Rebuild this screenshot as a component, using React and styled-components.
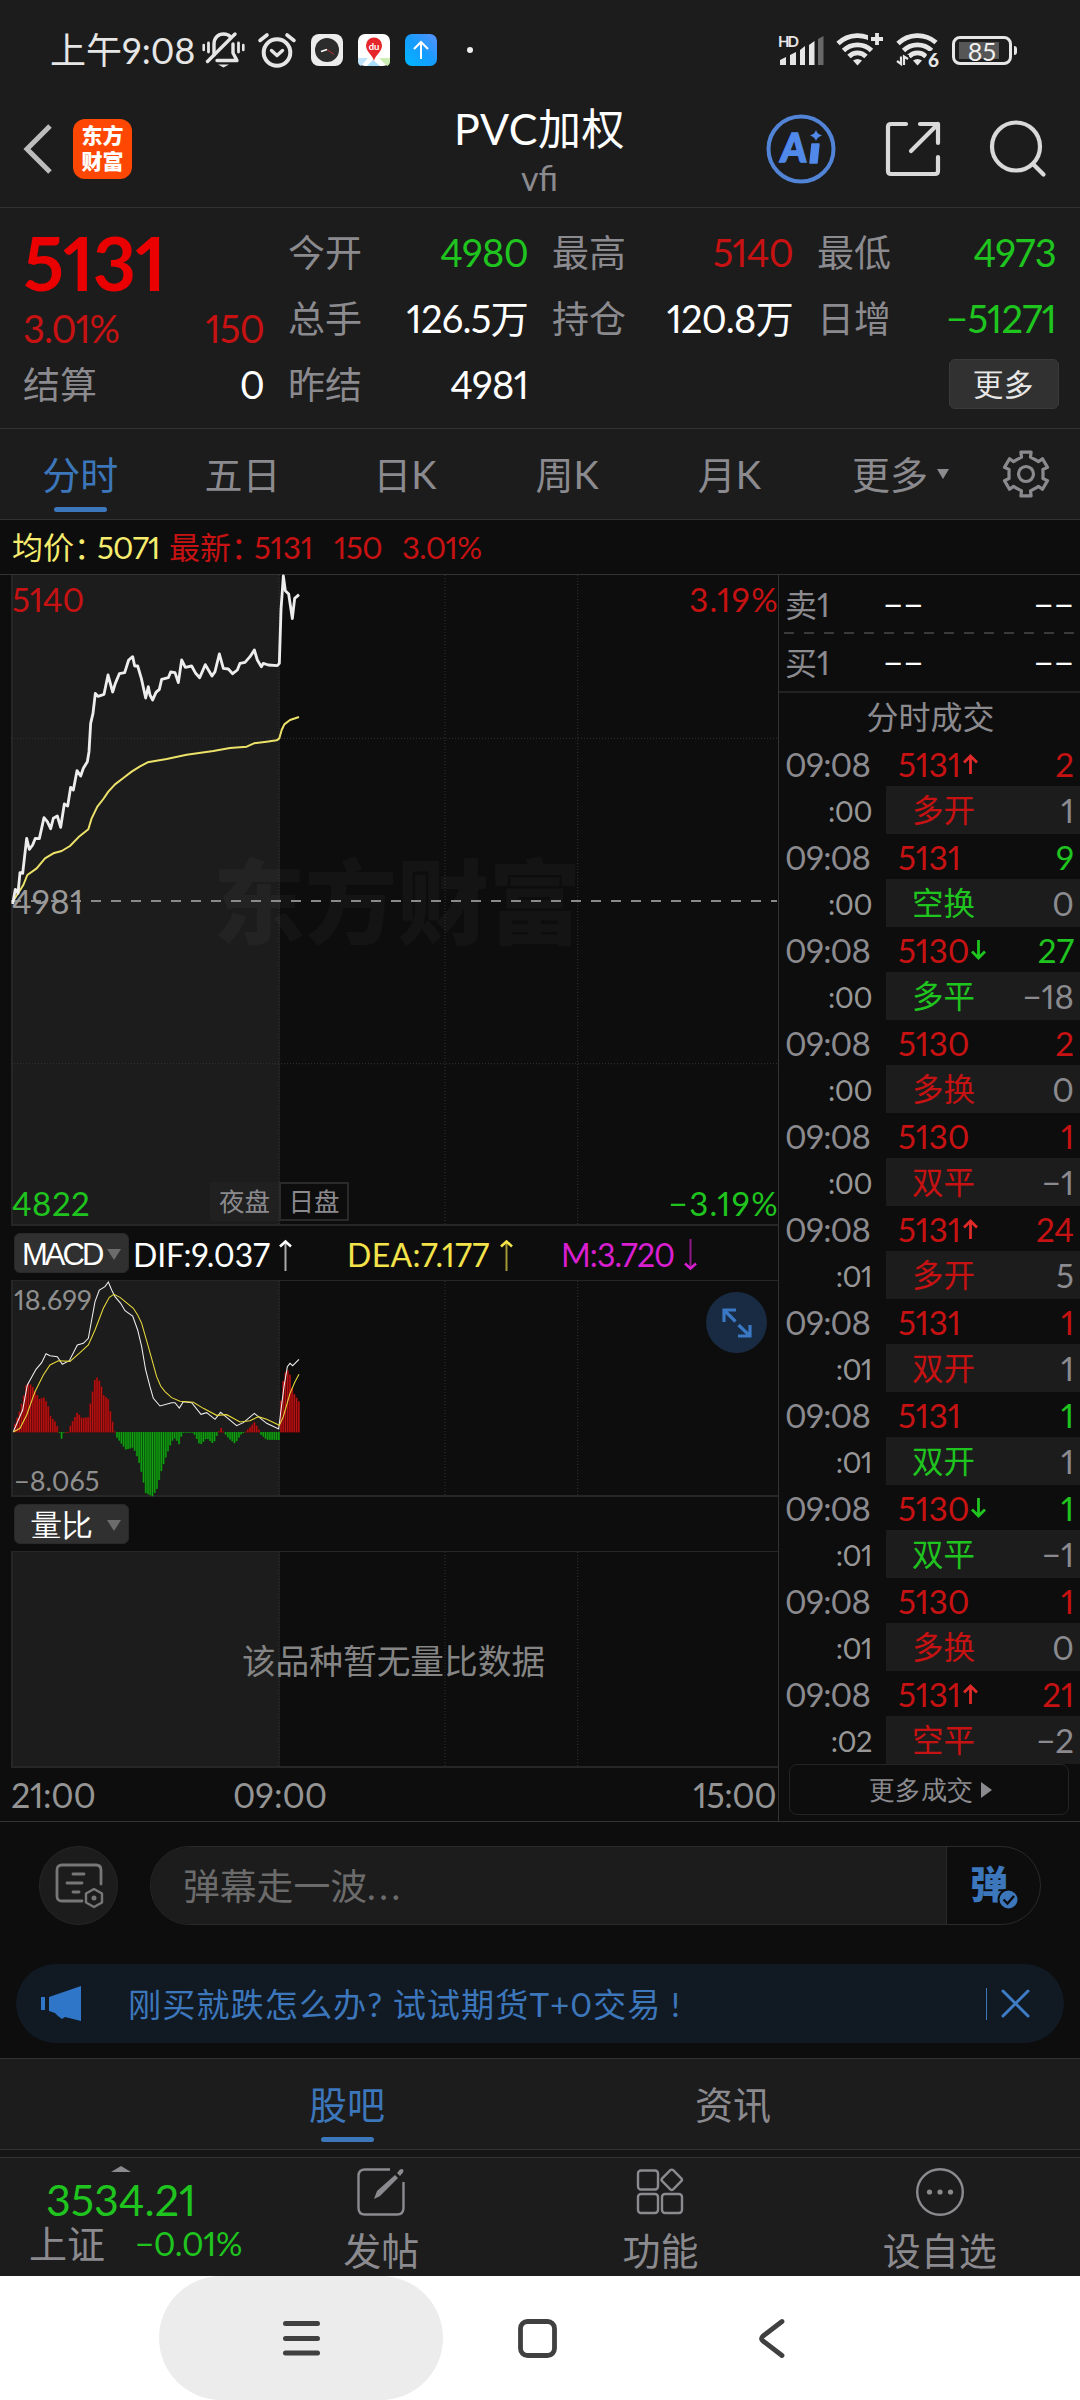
import React from 'react';
import styled, { createGlobalStyle } from 'styled-components';

const C = {
  page: '#0d0d0d',
  panel: '#1c1c1c',
  line: '#333333',
  faint: '#262626',
  grey: '#8b8a8f',
  red: '#c61212',
  green: '#1fc41f',
  yellow: '#f3e34a',
  blue: '#3c76bb',
  magenta: '#d91fd0',
};

const Global = createGlobalStyle`
  html, body { margin: 0; padding: 0; background: ${C.page}; }
  * { box-sizing: border-box; }
  body {
    font-family: Lato, "Noto Sans CJK SC", sans-serif;
    font-variant-numeric: proportional-nums;
    color: ${C.grey};
  }
  svg { display: block; flex: none; overflow: visible; }
`;

const Screen = styled.div`
  width: 1080px;
  height: 2400px;
  display: flex;
  flex-direction: column;
  background: ${C.page};
  overflow: hidden;
`;

const T = styled.span`
  display: inline-block;
  white-space: pre;
  line-height: 1;
  font-size: ${(p) => p.$s || 37}px;
  color: ${(p) => p.$c || C.grey};
  letter-spacing: ${(p) => p.$ls || 0}px;
  font-weight: ${(p) => p.$w || 400};
`;

/* ---------- status bar ---------- */
const StatusBar = styled.div`
  height: 96px;
  padding: 4px 62px 0 50px;
  display: flex;
  align-items: center;
  justify-content: space-between;
  background: ${C.panel};
`;
const StatusGroup = styled.div`
  display: flex;
  align-items: center;
  gap: ${(p) => p.$gap}px;
`;
const Clock = styled(T)`
  width: 144px;
  margin-right: -7px;
`;

const BellOff = () => (
  <svg width="43" height="38" viewBox="0 0 43 38" fill="none" stroke="#e6e6e6" strokeWidth="3.4" strokeLinecap="round">
    <path d="M12 24V13c0-6 4-10 9.500-10 3 0 5.500 1 7 3" />
    <path d="M31 13v9l4 7.500H15" strokeLinejoin="round" />
    <path d="M5.500 30.500 33 3" />
    <path d="M16 33.500h11l-5.500 3z" fill="#e6e6e6" stroke="none" />
    <path d="M6.500 12v9M36.500 12v9" strokeWidth="2.800" />
    <path d="M1.700 14v5M41.300 14v5" strokeWidth="2.600" />
  </svg>
);
const AlarmSvg = styled.svg`
  margin-left: -2px;
`;
const Alarm = () => (
  <AlarmSvg width="38" height="36" viewBox="0 0 38 36" fill="none" stroke="#e6e6e6" strokeWidth="4" strokeLinecap="round">
    <circle cx="19" cy="20.500" r="13.300" />
    <path d="M13.500 18.500l5.500 5 5.500-5" strokeWidth="3.400" strokeLinejoin="round" />
    <path d="M2 8.500l7-5.500M36 8.500L29 3" strokeWidth="3.600" />
  </AlarmSvg>
);
const ClockApp = () => (
  <svg width="32" height="32" viewBox="0 0 32 32">
    <rect width="32" height="32" rx="8" fill="#ececec" />
    <circle cx="16" cy="16" r="12" fill="#2c2c2c" />
    <path d="M10 17.500l6-2" stroke="#fff" strokeWidth="1.600" />
    <path d="M16 15.500l7 5" stroke="#c03030" strokeWidth="1" />
  </svg>
);
const MapApp = () => (
  <svg width="32" height="32" viewBox="0 0 32 32">
    <rect width="32" height="32" rx="7" fill="#fff" />
    <path d="M0 24h10l-7 8q-3-1-3-5z" fill="#bfe4fa" />
    <path d="M9 32l6-6 7 6z" fill="#a9dcf9" />
    <path d="M21 24h11v3q0 4-3 5z" fill="#cdeeb4" />
    <path d="M16 27c-1-6-8-9-8-15.500a8 8 0 0 1 16 0C24 18 17 21 16 27z" fill="#e5262b" />
    <text x="16" y="15.500" fontSize="9.500" fontWeight="700" fill="#fff" textAnchor="middle" fontFamily="Lato">du</text>
  </svg>
);
const UpApp = () => (
  <svg width="32" height="32" viewBox="0 0 32 32">
    <defs>
      <linearGradient id="up" x1="0" y1="1" x2="1" y2="0">
        <stop offset="0" stopColor="#00b8ff" />
        <stop offset=".5" stopColor="#159cff" />
        <stop offset="1" stopColor="#5a92fb" />
      </linearGradient>
    </defs>
    <rect width="32" height="32" rx="7" fill="url(#up)" />
    <path d="M16 25V8M9 15l7-7 7 7" fill="none" stroke="#fff" strokeWidth="2" />
  </svg>
);
const Dot = styled.i`
  width: 6px;
  height: 6px;
  margin-left: 15px;
  border-radius: 50%;
  background: #eee;
`;
const Signal = () => (
  <svg width="46" height="32" viewBox="0 0 46 32" fill="#e6e6e6">
    <text x="0" y="13" fontSize="15" fontWeight="700" fontFamily="Lato" textLength="21">HD</text>
    <path d="M2 26l6-3v8H2zM12 21l6-3v13h-6zM22 16l5-4v19h-5zM31 11l5.500-4v24H31z" />
    <path d="M40 5l5.500-3v29H40z" fill="#686868" />
  </svg>
);
const Wifi = ({ children, w }) => (
  <svg width={w} height="36" viewBox={`0 0 ${w} 36`} fill="none" stroke="#e6e6e6" strokeWidth="4.800">
    <path d="M2 12.500a28 28 0 0 1 38-1" transform="translate(0 -1)" />
    <path d="M7.500 18.500a20 20 0 0 1 28 0" />
    <path d="M13 24.500a12 12 0 0 1 17 0" />
    <path d="M17 28.500q4.500-3 9 0l-4.500 5z" fill="#e6e6e6" stroke="none" />
    {children}
  </svg>
);
const WifiPlus = () => (
  <Wifi w={48}>
    <path d="M32 0h16v14h-8l-8-5z" fill={C.panel} stroke="none" />
    <path d="M41 1v12M35 7h12" strokeWidth="3.800" />
  </Wifi>
);
const WifiSix = () => (
  <Wifi w={44}>
    <path d="M31 19h14v18H30zM0 23h13v13H0z" fill={C.panel} stroke="none" />
    <path d="M1 29l4 3V24.500M12 27l-4-2.500V33" strokeWidth="2.200" />
    <text x="32" y="35" fontSize="19" fontWeight="900" fill="#e6e6e6" stroke="none" fontFamily="Lato">6</text>
  </Wifi>
);
const Battery = styled.div`
  width: 60px;
  height: 29px;
  margin-right: 6px;
  border: 3px solid #e6e6e6;
  border-radius: 8px;
  padding: 3px 4px;
  position: relative;
  display: flex;
  &::after {
    content: '';
    position: absolute;
    right: -8px;
    top: 7px;
    width: 3.500px;
    height: 9px;
    border-radius: 0 3px 3px 0;
    background: #e6e6e6;
  }
`;
const Charge = styled.div`
  width: 40px;
  background: #565656;
`;
const Percent = styled(T)`
  position: absolute;
  inset: 0;
  text-align: center;
  line-height: 24px;
`;

/* ---------- header ---------- */
const Header = styled.header`
  height: 112px;
  display: grid;
  grid-template-columns: 1fr auto 1fr;
  align-items: center;
  padding: 0 34px 6px 24px;
  background: ${C.panel};
  border-bottom: 1px solid ${C.line};
`;
const HeaderSide = styled.div`
  display: flex;
  align-items: center;
  gap: ${(p) => p.$gap}px;
  justify-content: ${(p) => (p.$end ? 'flex-end' : 'flex-start')};
`;
const Brand = styled.div`
  width: 59px;
  height: 60px;
  border-radius: 12px;
  background: #fe4703;
  display: flex;
  flex-direction: column;
  align-items: center;
  justify-content: center;
  gap: 5px;
  padding-bottom: 3px;
`;
const TitleBox = styled.div`
  display: flex;
  flex-direction: column;
  align-items: center;
  gap: 11px;
  padding: 4px 0 0 9px;
`;
const BackIcon = () => (
  <svg width="28" height="50" viewBox="0 0 28 50"><path d="M26 2L3 25l23 23" fill="none" stroke="#bdbdbd" strokeWidth="5" /></svg>
);
const AiIcon = () => (
  <svg width="70" height="70" viewBox="0 0 70 70">
    <circle cx="35" cy="35" r="32.500" fill="none" stroke="#5184d6" strokeWidth="4" />
    <g fill="#5189ea" fontFamily="Lato" fontWeight="900" stroke="#5189ea" strokeWidth="1.500">
      <text x="14" y="48" fontSize="40" transform="skewX(-4) translate(3 0)" textLength="26" lengthAdjust="spacingAndGlyphs">A</text>
      <path d="M46 30h7l-2 19h-7z" strokeLinejoin="round" />
    </g>
    <path d="M50 16q1 4 6 5.500-5 1.500-6 5.500-1-4-6-5.500 5-1.500 6-5.500z" fill="#5189ea" />
  </svg>
);
const ShareIcon = () => (
  <svg width="56" height="56" viewBox="0 0 56 56" fill="none" stroke="#d9d9d9" strokeWidth="4.200" strokeLinecap="round" strokeLinejoin="round">
    <path d="M21 3H6Q3 3 3 6v44q0 3 3 3h44q3 0 3-3V36" />
    <path d="M35 3h18v19M53 3L26 30" />
  </svg>
);
const SearchIcon = () => (
  <svg width="56" height="57" viewBox="0 0 56 57" fill="none" stroke="#d9d9d9" strokeWidth="4.200" strokeLinecap="round">
    <circle cx="26" cy="26.500" r="24" />
    <path d="M43.500 44.500l10 10" />
  </svg>
);

/* ---------- quote ---------- */
const Quote = styled.section`
  height: 221px;
  display: grid;
  grid-template-columns: 241px 240px 241px 239px;
  column-gap: 24px;
  padding: 11px 24px 10px 23px;
  background: ${C.panel};
  border-bottom: 1px solid ${C.line};
`;
const QuoteCol = styled.div`
  display: flex;
  flex-direction: column;
`;
const Pair = styled.div`
  height: 66px;
  display: flex;
  align-items: center;
  justify-content: space-between;
`;
const Last = styled.div`
  height: 132px;
  display: flex;
  flex-direction: column;
  justify-content: space-between;
  padding: 6px 0 4px;
`;
const Split = styled.div`
  display: flex;
  justify-content: space-between;
`;
const MoreBtn = styled.button`
  width: 110px;
  height: 50px;
  margin: 8px -3px 0 auto;
  border: 1px solid #3a3a3a;
  border-radius: 6px;
  background: #313131;
  padding: 0;
  display: grid;
  place-items: center;
`;

/* ---------- tabs ---------- */
const Tabs = styled.nav`
  height: 91px;
  display: flex;
  background: ${C.panel};
  border-bottom: 1px solid ${C.line};
`;
const Tab = styled.div`
  width: ${(p) => p.$w || 162.300}px;
  display: flex;
  align-items: center;
  justify-content: center;
  gap: 9px;
  padding: ${(p) => p.$pt || 0}px 2px 0 0;
  position: relative;
  &::after {
    content: '';
    display: ${(p) => (p.$on ? 'block' : 'none')};
    position: absolute;
    left: 50%;
    margin-left: -27px;
    bottom: 7px;
    width: 53px;
    height: 5px;
    border-radius: 3px;
    background: ${C.blue};
  }
`;
const Tri = styled.i`
  width: 0;
  height: 0;
  border: solid transparent;
  border-width: ${(p) => p.$b};
  border-${(p) => p.$side}-color: ${(p) => p.$c};
`;
const gearPath = () => {
  const pts = [];
  for (let k = 0; k < 6; k++) {
    const base = -90 + k * 60;
    [[-27, 17], [-15, 17.5], [-13, 22.5], [13, 22.5], [15, 17.5], [27, 17]].forEach(([a, r]) => {
      const t = ((base + a) * Math.PI) / 180;
      pts.push(`${(24 + r * Math.cos(t)).toFixed(1)} ${(24 + r * Math.sin(t)).toFixed(1)}`);
    });
  }
  return `M${pts.join('L')}Z`;
};
const Gear = () => (
  <svg width="48" height="48" viewBox="0 0 48 48" fill="none" stroke={C.grey} strokeWidth="3.200" strokeLinejoin="round">
    <path d={gearPath()} />
    <circle cx="24" cy="24" r="7.500" />
  </svg>
);

const InfoLine = styled.div`
  height: 55px;
  display: flex;
  align-items: center;
  padding: 1px 0 0 12px;
  border-bottom: 1px solid ${C.line};
`;
const Info = styled(T)`
  width: ${(p) => p.$wd}px;
`;
const Colon = styled.span`
  letter-spacing: -9px;
`;

/* ---------- market body ---------- */
const Market = styled.main`
  height: 1247px;
  display: flex;
  border-bottom: 1px solid ${C.line};
`;
const Charts = styled.section`
  width: 779px;
  padding-left: 11px;
  border-right: 1px solid ${C.line};
  display: flex;
  flex-direction: column;
`;
const Plot = styled.div`
  position: relative;
  height: ${(p) => p.$h}px;
  border: 1px solid ${C.faint};
  border-width: ${(p) => p.$bw || '1px 0 2px 2px'};
  background: linear-gradient(90deg, ${C.panel} 267px, transparent 267px);
`;
const Over = styled(T)`
  position: absolute;
  left: ${(p) => (p.$l != null ? p.$l + 'px' : 'auto')};
  right: ${(p) => (p.$r != null ? p.$r + 'px' : 'auto')};
  top: ${(p) => p.$t}px;
`;
const Layer = styled.svg`
  position: absolute;
  left: -2px;
  top: 0;
`;
const Session = styled.div`
  position: absolute;
  left: ${(p) => p.$l}px;
  bottom: 3px;
  width: ${(p) => p.$wd}px;
  height: 39px;
  display: grid;
  place-items: center;
  background: ${(p) => p.$bg};
  border: ${(p) => (p.$bd ? '2px solid #2a2a2a' : 'none')};
`;
const Strip = styled.div`
  height: 54px;
  display: flex;
  align-items: center;
  padding-left: 3px;
`;
const Picker = styled.button`
  width: 115px;
  height: 40px;
  border: 1px solid #292929;
  border-radius: 6px;
  background: #303030;
  padding: 2px 7px 0 ${(p) => p.$pl}px;
  display: flex;
  align-items: center;
  justify-content: space-between;
`;
const Stat = styled.div`
  display: flex;
  align-items: center;
  margin-left: ${(p) => p.$ml}px;
  width: ${(p) => p.$wd}px;
  padding-top: 3px;
  justify-content: space-between;
`;
const Expand = styled.button`
  position: absolute;
  right: 11px;
  top: 11px;
  width: 61px;
  height: 61px;
  border: 0;
  border-radius: 50%;
  background: #182b42;
  display: grid;
  place-items: center;
  padding: 0;
`;
const Empty = styled.div`
  position: absolute;
  inset: 6px 4px 0 0;
  display: grid;
  place-items: center;
`;
const Axis = styled.div`
  height: 53px;
  display: grid;
  grid-template-columns: 222px 1fr auto;
  align-items: center;
  padding: 1px 2px 0 0;
`;

const LongArrow = ({ down, color }) => (
  <svg width="13" height="32" viewBox="0 0 13 32" transform={down ? 'rotate(180)' : undefined}>
    <path d="M6.500 3v29" stroke={color} strokeOpacity=".65" strokeWidth="2" />
    <path d="M1 7.500l5.500-5 5.500 5" fill="none" stroke={color} strokeWidth="2.600" />
  </svg>
);

const price =
  '38,1032 46,988 54,1000 60,938 68,940 80,835 88,868 98,855 106,835 118,836 132,773 142,785 152,806 160,775 172,768 182,802 193,732 203,738 212,682 220,690 231,632 242,648 250,625 262,605 267,575 272,490 279,460 286,400 294,409 312,403 324,345 338,396 346,370 358,341 374,338 386,300 398,290 404,318 413,318 424,355 437,414 445,380 450,405 458,420 468,397 478,388 485,358 505,353 512,336 525,338 535,368 545,300 556,322 575,318 587,340 599,353 616,314 636,348 645,335 658,282 670,325 685,327 698,341 712,330 720,310 735,307 750,290 763,270 772,300 784,320 790,310 805,315 832,317 838,310 843,150 850,48 856,92 866,102 877,176 884,115 897,104';
const average =
  '38,1025 70,975 82,945 110,925 135,895 160,880 185,873 210,858 235,832 265,808 275,775 292,740 310,717 325,695 345,673 370,654 395,635 420,619 443,607 500,597 560,584 640,573 690,564 740,560 762,550 800,545 830,541 838,535 845,510 853,493 870,480 897,471';
const dif =
  '40,755 55,720 68,690 82,615 108,568 125,548 138,521 150,527 172,530 187,553 208,542 232,495 250,490 265,475 275,420 285,365 298,330 315,320 325,306 335,330 345,350 362,370 375,392 398,408 413,450 425,500 437,570 450,620 460,655 480,678 515,668 525,668 538,684 550,665 575,668 603,703 620,698 645,718 662,697 680,712 710,737 730,728 763,700 800,730 836,747 843,690 852,620 862,560 870,550 878,557 897,538';
const dea =
  '40,756 60,745 80,705 105,635 130,585 150,555 175,542 210,544 240,518 265,495 285,450 310,385 328,352 342,343 360,352 400,385 413,405 425,430 445,500 470,590 482,618 495,635 515,653 540,664 580,667 610,685 650,706 680,704 720,726 750,722 775,710 800,718 838,736 850,710 870,640 885,605 897,583';
const envelope = [
  [40, 745], [60, 690], [72, 645], [80, 608], [95, 615], [105, 635], [118, 657], [133, 652], [145, 680], [152, 710],
  [165, 725], [172, 740], [178, 757], [185, 778], [192, 757], [205, 756], [212, 735], [232, 697], [245, 714],
  [265, 712], [272, 665], [285, 597], [292, 592], [302, 610], [310, 645], [325, 658], [332, 700], [342, 745],
  [348, 770], [378, 810], [400, 803], [415, 840], [425, 880], [437, 940], [457, 950], [470, 930], [485, 870],
  [500, 825], [515, 785], [525, 775], [538, 795], [547, 757], [580, 758], [600, 797], [620, 775], [640, 793],
  [655, 757], [664, 743], [671, 757], [685, 775], [705, 792], [722, 765], [735, 757], [750, 742], [763, 727],
  [775, 745], [783, 765], [800, 780], [840, 781], [841, 680], [850, 600], [860, 565], [870, 585], [878, 635],
  [900, 670],
];
const bars = [];
for (let x = 45; x < 900; x += 6.65) {
  const i = envelope.findIndex((p) => p[0] > x);
  const [x0, y0] = envelope[i - 1];
  const [x1, y1] = envelope[i];
  bars.push([x, y0 + ((y1 - y0) * (x - x0)) / (x1 - x0)]);
}

const Grid = ({ y, h }) => (
  <g stroke="#333" strokeWidth="3" strokeDasharray="3 6">
    {[837, 1335, 1733].map((x) => (
      <path key={x} d={`M${x} ${y}v${h}`} />
    ))}
  </g>
);
const PriceLayer = () => (
  <Layer width="767" height="651" viewBox="33 45 2301 1953">
    <Grid y={45} h={1953} />
    <path d="M33 535H2331M33 1511H2331" stroke="#333" strokeWidth="3" strokeDasharray="3 6" />
    <path d="M33 1023H2331" stroke="#8a8a8a" strokeWidth="6" strokeDasharray="30 30" />
    <polyline points={average} fill="none" stroke="#ece26a" strokeWidth="6" strokeLinejoin="round" />
    <polyline points={price} fill="none" stroke="#ededed" strokeWidth="8.500" strokeLinejoin="round" />
  </Layer>
);
const MacdLayer = () => (
  <Layer width="767" height="217" viewBox="33 303 2301 651">
    <Grid y={303} h={645} />
    {bars.map(([x, y]) => {
      const up = y < 757;
      const top = Math.min(y, 756);
      const h = Math.max(Math.abs(y - 757), 2);
      return (
        <g key={x}>
          <rect x={x - 3.3} y={top} width="6.650" height={h} fill={up ? '#7c0808' : '#086a08'} />
          <rect x={x - 1.5} y={top} width="3.200" height={h} fill={up ? '#bb1414' : '#16a016'} />
        </g>
      );
    })}
    <polyline points={dif} fill="none" stroke="#ededed" strokeWidth="3.200" />
    <polyline points={dea} fill="none" stroke="#e6d83c" strokeWidth="3.200" />
  </Layer>
);
const RatioLayer = () => (
  <Layer width="767" height="214" viewBox="33 0 2301 642">
    <Grid y={0} h={642} />
  </Layer>
);

/* ---------- side panel ---------- */
const Side = styled.aside`
  flex: 1;
  display: flex;
  flex-direction: column;
`;
const Book = styled.div`
  height: 57px;
  display: grid;
  grid-template-columns: 98px 1fr auto;
  align-items: center;
  padding: ${(p) => p.$pt}px 6px 0 6px;
`;
const DashRule = () => (
  <svg width="301" height="2"><path d="M5 1h291" stroke="#3a3a3a" strokeWidth="2" strokeDasharray="10 10" /></svg>
);
const SideTitle = styled.div`
  height: 50px;
  border-top: 2px solid #222;
  display: grid;
  place-items: center;
  padding: 0 0 1px 2px;
`;
const Trade = styled.div`
  height: 93px;
  display: grid;
  grid-template: 45px 48px / 107px 1fr;
`;
const TimeCell = styled.div`
  display: flex;
  align-items: center;
  justify-content: ${(p) => (p.$end ? 'flex-end' : 'flex-start')};
  padding: 1px 14px 0 6px;
`;
const DealCell = styled.div`
  display: flex;
  align-items: center;
  justify-content: space-between;
  padding: 1px 6px 0 ${(p) => p.$pl}px;
  background: ${(p) => (p.$shade ? C.panel : 'transparent')};
`;
const PriceBox = styled.div`
  display: flex;
  align-items: center;
  gap: 2px;
`;
const SmallArrow = ({ up }) => (
  <svg width="15" height="20" viewBox="0 0 15 20" transform={up ? undefined : 'rotate(180)'} fill="none" stroke={up ? '#e02a2a' : C.green} strokeWidth="2.800">
    <path d="M7.500 20V3M1 8.500L7.500 2 14 8.500" />
  </svg>
);
const MoreTrades = styled.button`
  width: 280px;
  height: 51px;
  margin-left: 10px;
  border: 1px solid #242424;
  border-radius: 8px;
  background: transparent;
  display: flex;
  align-items: center;
  justify-content: center;
  gap: 8px;
  padding: 0 0 0 3px;
`;

const R = C.red;
const G = C.green;
const trades = [
  ['5131', 'up', '2', R, ':00', '多开', R, '1'],
  ['5131', '', '9', G, ':00', '空换', G, '0'],
  ['5130', 'down', '27', G, ':00', '多平', G, '−18'],
  ['5130', '', '2', R, ':00', '多换', R, '0'],
  ['5130', '', '1', R, ':00', '双平', R, '−1'],
  ['5131', 'up', '24', R, ':01', '多开', R, '5'],
  ['5131', '', '1', R, ':01', '双开', R, '1'],
  ['5131', '', '1', G, ':01', '双开', G, '1'],
  ['5130', 'down', '1', G, ':01', '双平', G, '−1'],
  ['5130', '', '1', R, ':01', '多换', R, '0'],
  ['5131', 'up', '21', R, ':02', '空平', R, '−2'],
];

/* ---------- comment bar and banner ---------- */
const Composer = styled.div`
  display: flex;
  gap: 32px;
  padding: 24px 39px 0;
`;
const RoundBtn = styled.button`
  width: 79px;
  height: 79px;
  border: 1px solid #262626;
  border-radius: 50%;
  background: ${C.panel};
  padding: 0;
  display: grid;
  place-items: center;
`;
const Pill = styled.div`
  flex: 1;
  height: 79px;
  border: 1px solid #2a2a2a;
  border-radius: 40px;
  overflow: hidden;
  display: flex;
`;
const Field = styled.div`
  flex: 1;
  background: ${C.panel};
  border-right: 1px solid #2a2a2a;
  display: flex;
  align-items: center;
  padding: 2px 0 0 32px;
`;
const Danmu = styled.div`
  width: 93px;
  padding: 0 0 5px 23px;
  display: flex;
  align-items: center;
  position: relative;
`;
const Badge = styled.svg`
  position: absolute;
  left: 50px;
  top: 41px;
`;
const Banner = styled.div`
  height: 79px;
  margin: 39px 16px 15px;
  border-radius: 40px;
  background: #111922;
  display: flex;
  align-items: center;
  padding: 0 34px 0 25px;
`;
const BannerText = styled(T)`
  margin: 2px 0 0 47px;
  flex: 1;
`;
const Rule = styled.i`
  width: 1px;
  height: 32px;
  background: ${C.blue};
  margin-right: 14px;
`;

/* ---------- bottom ---------- */
const SubTabs = styled.nav`
  height: 92px;
  display: flex;
  padding-left: 155px;
  background: ${C.panel};
  border: solid ${C.line};
  border-width: 1px 0;
`;
const Gap = styled.div`
  height: 7px;
  background: #151515;
`;
const Dock = styled.footer`
  height: 119px;
  display: flex;
  background: ${C.panel};
  border-top: 1px solid ${C.line};
`;
const IndexBox = styled.div`
  width: 242px;
  display: flex;
  flex-direction: column;
  align-items: center;
  gap: 6px;
  padding-top: 8px;
`;
const IndexRow = styled.div`
  display: flex;
  align-items: center;
  justify-content: space-between;
  width: 213px;
  margin: -3px 0 0 29px;
`;
const DockItem = styled.div`
  width: 279.500px;
  display: flex;
  flex-direction: column;
  align-items: center;
  gap: 15px;
  padding: 10px 1px 0 0;
`;
const NavBar = styled.div`
  height: 124px;
  background: #fff;
  display: flex;
  align-items: center;
  padding-left: 159px;
`;
const NavPill = styled.div`
  width: 284px;
  height: 124px;
  border-radius: 62px;
  background: #ececec;
  display: grid;
  place-items: center;
`;
const NavIcon = styled.div`
  margin-left: ${(p) => p.$ml}px;
`;

const Num = ({ c, children }) => (
  <T $s={38} $c={c} $ls={-0.7}>{children}</T>
);

export default function App() {
  return (
    <Screen>
      <Global />
      <StatusBar>
        <StatusGroup $gap={15}>
          <Clock $s={36} $c="#e6e6e6">上午9:08</Clock>
          <BellOff />
          <Alarm />
          <ClockApp />
          <MapApp />
          <UpApp />
          <Dot />
        </StatusGroup>
        <StatusGroup $gap={12}>
          <Signal />
          <WifiPlus />
          <WifiSix />
          <Battery>
            <Charge />
            <Percent $s={25} $c="#f0f0f0">85</Percent>
          </Battery>
        </StatusGroup>
      </StatusBar>

      <Header>
        <HeaderSide $gap={21}>
          <BackIcon />
          <Brand>
            <T $s={21} $w={900} $c="#fff">东方</T>
            <T $s={21} $w={900} $c="#fff">财富</T>
          </Brand>
        </HeaderSide>
        <TitleBox>
          <T $s={43} $c="#fff" $ls={0.5}>PVC加权</T>
          <T $s={34}>vfi</T>
        </TitleBox>
        <HeaderSide $gap={49} $end>
          <AiIcon />
          <ShareIcon />
          <SearchIcon />
        </HeaderSide>
      </Header>

      <Quote>
        <QuoteCol>
          <Last>
            <T $s={75} $c="#ea0000" $w={700} $ls={-1}>5131</T>
            <Split>
              <T $s={38} $c={R} $ls={-1}>3.01%</T>
              <Num c={R}>150</Num>
            </Split>
          </Last>
          <Pair><T>结算</T><Num c="#fff">0</Num></Pair>
        </QuoteCol>
        <QuoteCol>
          <Pair><T>今开</T><Num c={G}>4980</Num></Pair>
          <Pair><T>总手</T><Num c="#fff">126.5万</Num></Pair>
          <Pair><T>昨结</T><Num c="#fff">4981</Num></Pair>
        </QuoteCol>
        <QuoteCol>
          <Pair><T>最高</T><Num c={R}>5140</Num></Pair>
          <Pair><T>持仓</T><Num c="#fff">120.8万</Num></Pair>
        </QuoteCol>
        <QuoteCol>
          <Pair><T>最低</T><Num c={G}>4973</Num></Pair>
          <Pair><T>日增</T><Num c={G}>−51271</Num></Pair>
          <MoreBtn><T $s={31} $c="#e8e8e8">更多</T></MoreBtn>
        </QuoteCol>
      </Quote>

      <Tabs>
        <Tab $on><T $s={38} $c={C.blue}>分时</T></Tab>
        <Tab><T $s={38}>五日</T></Tab>
        <Tab><T $s={38}>日K</T></Tab>
        <Tab><T $s={38}>周K</T></Tab>
        <Tab><T $s={38}>月K</T></Tab>
        <Tab $w={180}>
          <T $s={38}>更多</T>
          <Tri $b="10px 6px 0 6px" $side="top" $c={C.grey} />
        </Tab>
        <Tab $w={72}><Gear /></Tab>
      </Tabs>

      <InfoLine>
        <Info $s={31} $c="#f6ec6e" $wd={85}>均价<Colon>：</Colon></Info>
        <Info $s={31} $c="#f6ec6e" $wd={72} $ls={-0.8}>5071</Info>
        <Info $s={31} $c={R} $wd={85}>最新<Colon>：</Colon></Info>
        <Info $s={31} $c={R} $wd={80}>5131</Info>
        <Info $s={31} $c={R} $wd={68} $ls={-0.4}>150</Info>
        <Info $s={31} $c={R} $wd={90} $ls={-0.6}>3.01%</Info>
      </InfoLine>

      <Market>
        <Charts>
          <Plot $h={652} $bw="0 0 2px 2px">
            <Over $l={200} $t={281} $s={92} $w={900} $c="rgba(255,255,255,.03)">东方财富</Over>
            <PriceLayer />
            <Over $l={-1} $t={8} $s={33} $c={R}>5140</Over>
            <Over $r={-1} $t={8} $s={33} $c={R} $ls={1.4}>3.19%</Over>
            <Over $l={-1} $t={310} $s={33} $c="#9a9a9a" $ls={0.4}>4981</Over>
            <Over $l={-1} $t={612} $s={33} $c={G} $ls={0.4}>4822</Over>
            <Over $r={-1} $t={612} $s={33} $c={G} $ls={1.4}>−3.19%</Over>
            <Session $l={197} $wd={69} $bg="rgba(255,255,255,.02)"><T $s={25.5}>夜盘</T></Session>
            <Session $l={266} $wd={70} $bg="transparent" $bd><T $s={25.5}>日盘</T></Session>
          </Plot>
          <Strip>
            <Picker $pl={7}>
              <T $s={31} $c="#fff" $ls={-3}>MACD</T>
              <Tri $b="11px 7px 0 7px" $side="top" $c="#6c6c6c" />
            </Picker>
            <Stat $ml={4} $wd={159}><T $s={32} $c="#fff" $ls={-0.2}>DIF:9.037</T><LongArrow color="#fff" /></Stat>
            <Stat $ml={55} $wd={166}><T $s={32} $c={C.yellow} $ls={0.3}>DEA:7.177</T><LongArrow color={C.yellow} /></Stat>
            <Stat $ml={48} $wd={136}><T $s={32} $c={C.magenta} $ls={-0.9}>M:3.720</T><LongArrow down color={C.magenta} /></Stat>
          </Strip>
          <Plot $h={217}>
            <MacdLayer />
            <Over $l={1} $t={5} $s={27} $c="#8f8f8f">18.699</Over>
            <Over $l={1} $t={186} $s={27} $c="#8f8f8f">−8.065</Over>
            <Expand>
              <svg width="30" height="30" viewBox="0 0 30 30" fill="none" stroke="#3a78c4" strokeWidth="3.200">
                <path d="M2 14V2h12M2 2l11.500 11.500M28 17v11H16M28 28L16.500 17" />
              </svg>
            </Expand>
          </Plot>
          <Strip>
            <Picker $pl={16}>
              <T $s={31} $c="#fff">量比</T>
              <Tri $b="11px 7px 0 7px" $side="top" $c="#6c6c6c" />
            </Picker>
          </Strip>
          <Plot $h={217}>
            <RatioLayer />
            <Empty><T $s={33.7} $c="#858585">该品种暂无量比数据</T></Empty>
          </Plot>
          <Axis>
            <T $s={34} $c="#949494" $ls={-0.3}>21:00</T>
            <T $s={34} $c="#949494">09:00</T>
            <T $s={34} $c="#949494" $ls={-0.5}>15:00</T>
          </Axis>
        </Charts>

        <Side>
          <Book $pt={2}><T $s={32}>卖1</T><T $s={35} $c="#fff">−−</T><T $s={35} $c="#fff">−−</T></Book>
          <DashRule />
          <Book $pt={0}><T $s={32}>买1</T><T $s={35} $c="#fff">−−</T><T $s={35} $c="#fff">−−</T></Book>
          <SideTitle><T $s={32}>分时成交</T></SideTitle>
          {trades.map(([p, dir, q, qc, sec, kind, kc, n], i) => (
            <Trade key={i}>
              <TimeCell><T $s={33} $ls={-0.8}>09:08</T></TimeCell>
              <DealCell $pl={12}>
                <PriceBox>
                  <T $s={33} $c={R}>{p}</T>
                  {dir && <SmallArrow up={dir === 'up'} />}
                </PriceBox>
                <T $s={33} $c={qc}>{q}</T>
              </DealCell>
              <TimeCell $end><T $s={29} $c="#979797" $ls={-0.5}>{sec}</T></TimeCell>
              <DealCell $pl={26} $shade>
                <T $s={31.5} $c={kc}>{kind}</T>
                <T $s={33}>{n}</T>
              </DealCell>
            </Trade>
          ))}
          <MoreTrades>
            <T $s={26}>更多成交</T>
            <Tri $b="8px 0 8px 11px" $side="left" $c={C.grey} />
          </MoreTrades>
        </Side>
      </Market>

      <Composer>
        <RoundBtn>
          <svg width="48" height="46" viewBox="0 0 48 46" fill="none" stroke="#777" strokeWidth="2.800" strokeLinecap="round">
            <path d="M26 38H6q-5 0-5-5V7q0-5 5-5h34q5 0 5 5v14" transform="translate(1 0)" />
            <path d="M18 11h11M12 20h15M18 29h6" />
            <path d="M39 26l8 4.500v9L39 44l-8-4.500v-9z" strokeWidth="2.400" strokeLinejoin="round" />
            <circle cx="39" cy="35" r="2.500" fill="#777" stroke="none" />
          </svg>
        </RoundBtn>
        <Pill>
          <Field>
            <T $s={36.8} $c="#6b6b6b">弹幕走一波</T>
            <T $s={36.8} $c="#6b6b6b" $ls={3.6}>...</T>
          </Field>
          <Danmu>
            <T $s={38} $w={900} $c={C.blue}>弹</T>
            <Badge width="23" height="23">
              <circle cx="11.500" cy="11.500" r="10" fill={C.blue} stroke={C.page} strokeWidth="2" />
              <path d="M6.500 11.500l4 4 6.500-7.500" fill="none" stroke={C.page} strokeWidth="2.400" />
            </Badge>
          </Danmu>
        </Pill>
      </Composer>
      <Banner>
        <svg width="40" height="35" viewBox="0 0 40 35" fill="#3076c8">
          <path d="M0 11h4v13H0zM8 11L40 0v35l-16-4-3 2-4-3-3-3-6-2z" />
        </svg>
        <BannerText $s={33.2} $c={C.blue} $ls={1}>刚买就跌怎么办? 试试期货T+0交易 !</BannerText>
        <Rule />
        <svg width="29" height="29" viewBox="0 0 29 29"><path d="M2 2l25 25M27 2L2 27" stroke="#3f7cc6" strokeWidth="3" strokeLinecap="round" /></svg>
      </Banner>

      <SubTabs>
        <Tab $w={386} $on><T $s={38} $c={C.blue}>股吧</T></Tab>
        <Tab $w={386}><T $s={38}>资讯</T></Tab>
      </SubTabs>
      <Gap />
      <Dock>
        <IndexBox>
          <Tri $b="0 10px 6px 10px" $side="bottom" $c={C.grey} />
          <T $s={43} $c={G}>3534.21</T>
          <IndexRow><T $s={38}>上证</T><T $s={33} $c={G} $ls={-0.4}>−0.01%</T></IndexRow>
        </IndexBox>
        <DockItem>
          <svg width="48" height="48" viewBox="0 0 48 48" fill="none" stroke={C.grey} strokeWidth="2.400">
            <path d="M33 1.500H8Q1.500 1.500 1.500 8v32q0 6.500 6.500 6.500h32q6.500 0 6.500-6.500V14" />
            <path d="M17 31l3-8L38 7l3 3-18 18zM40 5l3-3.500q2-1 3 0t0 3L43 8z" fill={C.grey} stroke="none" />
          </svg>
          <T $s={38}>发帖</T>
        </DockItem>
        <DockItem>
          <svg width="48" height="48" viewBox="0 0 48 48" fill="none" stroke={C.grey} strokeWidth="2.400">
            <rect x="2" y="2.500" width="20" height="19" rx="3" />
            <rect x="2" y="26" width="20" height="19" rx="3" />
            <rect x="26" y="26" width="20" height="19" rx="3" />
            <rect x="28" y="4" width="15.500" height="15.500" rx="2" transform="rotate(45 35.750 11.750)" />
          </svg>
          <T $s={38}>功能</T>
        </DockItem>
        <DockItem>
          <svg width="50" height="48" viewBox="0 0 50 48" fill="none" stroke={C.grey} strokeWidth="2.400">
            <circle cx="25" cy="24" r="22.800" />
            <g fill={C.grey} stroke="none"><circle cx="14.500" cy="24" r="2.600" /><circle cx="25" cy="24" r="2.600" /><circle cx="35.500" cy="24" r="2.600" /></g>
          </svg>
          <T $s={38}>设自选</T>
        </DockItem>
      </Dock>
      <NavBar>
        <NavPill>
          <svg width="37" height="35" viewBox="0 0 37 35" stroke="#404040" strokeWidth="5" strokeLinecap="round">
            <path d="M2.500 2.500h32M2.500 17.500h32M2.500 32h32" />
          </svg>
        </NavPill>
        <NavIcon $ml={75}>
          <svg width="39" height="39" viewBox="0 0 39 39" fill="none" stroke="#404040" strokeWidth="4.800"><rect x="2.500" y="2.500" width="34" height="34" rx="7" /></svg>
        </NavIcon>
        <NavIcon $ml={202}>
          <svg width="26" height="39" viewBox="0 0 26 39" fill="none" stroke="#404040" strokeWidth="4.800" strokeLinecap="round" strokeLinejoin="round"><path d="M23 2.500L4 17q-3 2.500 0 5l19 14.500" /></svg>
        </NavIcon>
      </NavBar>
    </Screen>
  );
}
